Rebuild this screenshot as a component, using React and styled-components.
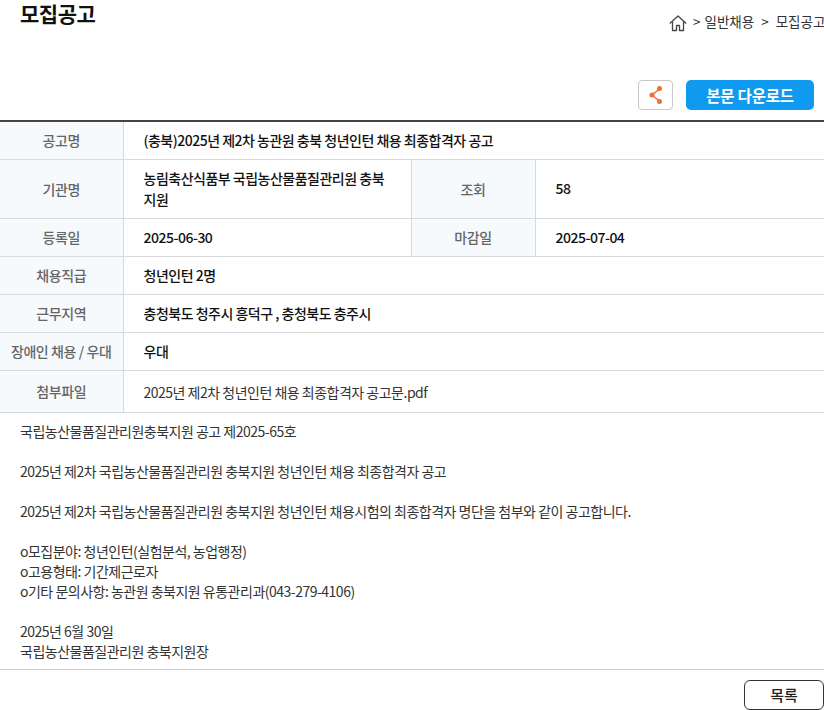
import React from "react";
import styled, { createGlobalStyle } from "styled-components";

const Global = createGlobalStyle`
  html, body { margin: 0; padding: 0; background: #fff; }
  body { font-family: "Noto Sans CJK KR", "Noto Sans", sans-serif; color: #111; overflow: hidden; }
`;
const Page = styled.div`width: 824px; height: 710px; overflow: hidden;`;
const Header = styled.header`display: flex; justify-content: space-between; align-items: flex-start; height: 80px;`;
const Title = styled.h1`margin: 0 0 0 20px; font-size: 21px; line-height: 26px; font-weight: 700; letter-spacing: -0.5px; color: #111;`;
const Crumbs = styled.nav`display: flex; align-items: flex-start; margin-top: 11px; font-size: 13.5px; line-height: 20px; color: #333; white-space: nowrap; width: 155px; flex: none;`;
const HomeIcon = styled.svg`width: 18px; height: 18px; flex: none; margin: 3px 6px 0 0;`;
const Sep = styled.span`margin: 0 ${p => p.$after}px 0 ${p => p.$before}px;`;
const Actions = styled.div`display: flex; justify-content: flex-end; align-items: center; gap: 13px; height: 30px; padding-right: 10px; margin-bottom: 10px;`;
const ShareButton = styled.button`width: 35px; height: 30px; padding: 0; border: 1px solid #c8c8c8; border-radius: 4px; background: #fff; display: flex; align-items: center; justify-content: center;`;
const DownloadButton = styled.button`width: 128px; height: 30px; padding: 0; border: 0; border-radius: 5px; background: #0f9af0; color: #fff; font: 700 15.500px/30px "Noto Sans CJK KR", sans-serif; letter-spacing: -0.2px;`;
const Table = styled.table`width: 824px; table-layout: fixed; border-collapse: collapse; border-top: 2px solid #444; font-size: 14px; letter-spacing: -0.5px;`;
const Row = styled.tr`height: ${p => p.$h}px; border-bottom: 1px solid #d9d9d9;`;
const Head = styled.th`padding: 0; background: #f6fafd; border-right: 1px solid #d9d9d9; font-weight: 500; color: #666; text-align: center; white-space: nowrap; box-sizing: border-box; letter-spacing: -0.4px;`;
const Cell = styled.td`padding: ${p => (p.$plain ? "2px" : "0")} 20px 0; font-weight: ${p => (p.$plain ? 400 : 500)}; color: ${p => (p.$plain ? "#333" : "#111")}; line-height: 21px; box-sizing: border-box; border-right: ${p => (p.$divided ? "1px solid #d9d9d9" : "0")};`;
const Body = styled.div`height: 257px; box-sizing: border-box; padding: 8px 20px 0; font-size: 14px; line-height: 20px; letter-spacing: -0.5px; color: #333; border-bottom: 1px solid #ccc; white-space: pre-line;`;
const Footer = styled.footer`display: flex; justify-content: flex-end; padding-top: 10px;`;
const ListButton = styled.button`width: 80px; height: 30px; padding: 0; border: 1px solid #333; border-radius: 6px; background: #fff; color: #222; font: 500 15px/28px "Noto Sans CJK KR", sans-serif;`;

const text = `국립농산물품질관리원충북지원 공고 제2025-65호

2025년 제2차 국립농산물품질관리원 충북지원 청년인턴 채용 최종합격자 공고

2025년 제2차 국립농산물품질관리원 충북지원 청년인턴 채용시험의 최종합격자 명단을 첨부와 같이 공고합니다.

o모집분야: 청년인턴(실험분석, 농업행정)
o고용형태: 기간제근로자
o기타 문의사항: 농관원 충북지원 유통관리과(043-279-4106)

2025년 6월 30일
국립농산물품질관리원 충북지원장`;

export default function App() {
  return (
    <Page>
      <Global />
      <Header>
        <Title>모집공고</Title>
        <Crumbs>
          <HomeIcon viewBox="0 0 18 18" fill="none" stroke="#444" strokeWidth="1.3" strokeLinejoin="round">
            <path d="M.8 9.500 9 2l8.200 7.500" />
            <path d="M3.500 7.500V16.500h4V11.500h3V16.500h4V7.500" />
          </HomeIcon>
          <Sep $before={0} $after={4}>&gt;</Sep>
          <span>일반채용</span>
          <Sep $before={7} $after={7}>&gt;</Sep>
          <span>모집공고</span>
        </Crumbs>
      </Header>
      <Actions>
        <ShareButton aria-label="공유">
          <svg width="14" height="20" viewBox="0 0 14 20" fill="none">
            <path d="M11 3.500 3 10l8 6.500" stroke="#ee7136" strokeWidth="1.500" />
            <circle cx="10.500" cy="3.500" r="2.500" fill="#ee7136" />
            <circle cx="3" cy="10" r="2.500" fill="#ee7136" />
            <circle cx="10.500" cy="16.500" r="2.500" fill="#ee7136" />
          </svg>
        </ShareButton>
        <DownloadButton>본문 다운로드</DownloadButton>
      </Actions>
      <Table>
        <colgroup>
          <col width="123" />
          <col width="288" />
          <col width="124" />
          <col width="289" />
        </colgroup>
        <tbody>
          <Row $h={38}><Head>공고명</Head><Cell colSpan={3}>(충북)2025년 제2차 농관원 충북 청년인턴 채용 최종합격자 공고</Cell></Row>
          <Row $h={59}><Head>기관명</Head><Cell $divided>농림축산식품부 국립농산물품질관리원 충북지원</Cell><Head>조회</Head><Cell>58</Cell></Row>
          <Row $h={38}><Head>등록일</Head><Cell $divided>2025-06-30</Cell><Head>마감일</Head><Cell>2025-07-04</Cell></Row>
          <Row $h={38}><Head>채용직급</Head><Cell colSpan={3}>청년인턴 2명</Cell></Row>
          <Row $h={38}><Head>근무지역</Head><Cell colSpan={3}>충청북도 청주시 흥덕구 , 충청북도 충주시</Cell></Row>
          <Row $h={38}><Head>장애인 채용 / 우대</Head><Cell colSpan={3}>우대</Cell></Row>
          <Row $h={42}><Head>첨부파일</Head><Cell colSpan={3} $plain>2025년 제2차 청년인턴 채용 최종합격자 공고문.pdf</Cell></Row>
        </tbody>
      </Table>
      <Body>{text}</Body>
      <Footer><ListButton>목록</ListButton></Footer>
    </Page>
  );
}
